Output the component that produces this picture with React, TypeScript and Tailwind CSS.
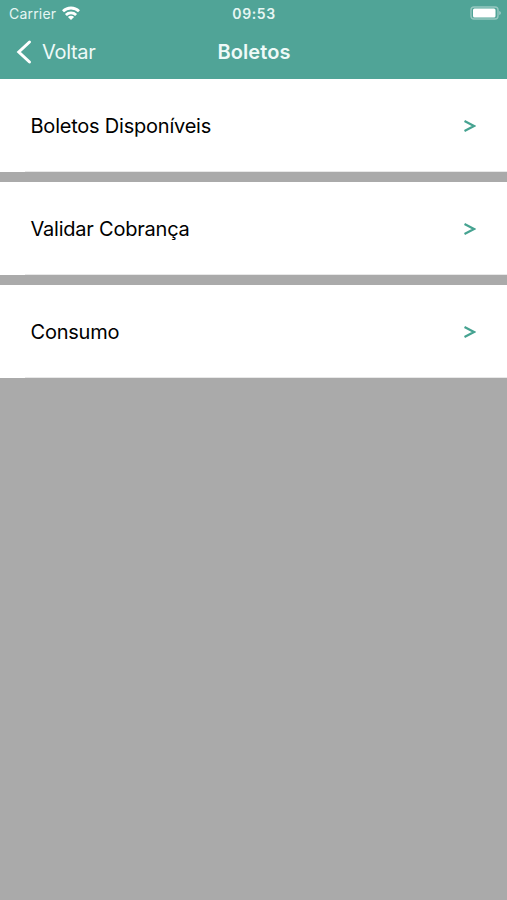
const items = ["Boletos Disponíveis", "Validar Cobrança", "Consumo"]

function StatusBar() {
  return (
    <div className="grid h-[27px] grid-cols-3 items-center pr-[6px] pl-[9px]">
      <div className="flex items-center gap-[6px]">
        <span className="text-[14px] tracking-[0.2px] text-[#e6f6f3]">Carrier</span>
        <svg className="-mt-[2px]" width="18" height="14" viewBox="0 0 18 14" fill="none" stroke="currentColor" strokeWidth="2.8">
          <path d="M1 5.2a11.6 11.6 0 0 1 16 0" />
          <path d="M3.9 8.9a7.3 7.3 0 0 1 10.2 0" />
          <path d="M9 14 5.9 11a4.2 4.2 0 0 1 6.2 0Z" fill="currentColor" stroke="none" />
        </svg>
      </div>
      <span className="-ml-[2px] text-center text-[14px] font-semibold tracking-[0.6px] text-[#e6f6f3]">09:53</span>
      <svg className="-mt-px justify-self-end" width="31" height="14" viewBox="0 0 31 14">
        <rect x="1" y="1" width="27" height="12" rx="3" fill="none" stroke="currentColor" strokeOpacity="0.4" strokeWidth="1.4" />
        <rect x="3" y="2.5" width="22.5" height="9" rx="1.5" fill="currentColor" />
        <path d="M29.3 5v4q1.5-.6 1.5-2t-1.5-2" fill="currentColor" fillOpacity="0.5" />
      </svg>
    </div>
  )
}

function Header() {
  return (
    <header className="h-[79px] bg-[#50a497] text-white">
      <StatusBar />
      <div className="grid h-[50px] grid-cols-3 items-center px-4">
        <button className="flex items-center gap-[10px] text-[20px] tracking-[-0.3px] text-[#eefaf8]">
          <svg width="16" height="26" viewBox="0 0 16 26" fill="none" stroke="white" strokeWidth="3" strokeLinecap="round">
            <path d="M13.5 3 2.8 13l10.7 10" />
          </svg>
          Voltar
        </button>
        <h1 className="pl-px text-center text-[20px] font-semibold tracking-[0.1px] text-[#eefaf8]">Boletos</h1>
      </div>
    </header>
  )
}

export default function App() {
  return (
    <div className="min-h-screen bg-[#aaaaaa] font-['Inter',sans-serif]">
      <Header />
      <ul className="flex flex-col gap-[10px]">
        {items.map((item) => (
          <li key={item} className="h-[93px] bg-white pl-[25px]">
            <div className="flex h-full items-center justify-between border-b border-[#e8e8e8] pt-px pr-[31px] pl-[5.5px] text-[20px] text-black">
              <span className="tracking-[-0.22px]">{item}</span>
              <svg width="12" height="12" viewBox="0 0 12 12" fill="none" stroke="#46a391" strokeWidth="2.2">
                <path d="M0.5 1 10 6 0.5 11" />
              </svg>
            </div>
          </li>
        ))}
      </ul>
    </div>
  )
}
